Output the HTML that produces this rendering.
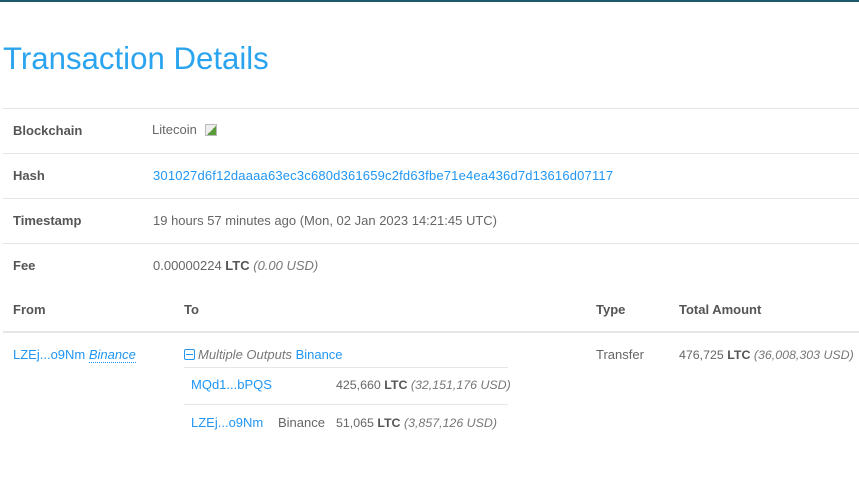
<!DOCTYPE html>
<html><head><style>
body{margin:0;width:859px;height:485px;background:#fff;font-family:"Liberation Sans",sans-serif;font-size:13px;color:#666;position:relative;overflow:hidden}
.a{position:absolute;white-space:nowrap}
.top{position:absolute;left:0;top:0;width:859px;height:2px;background:#1f5868}
.h{position:absolute;left:3px;height:1px;background:#e6e6e6;width:856px}
.lbl{font-weight:bold;color:#555}
.blue{color:#2196f3}
.s{font-size:12.4px}
b{color:#555}
i{color:#777}
</style></head><body>
<div class="top"></div>
<div class="a" style="left:3px;top:41px;font-size:31.2px;color:#2ba4f0">Transaction Details</div>
<div class="h" style="top:108px"></div>
<div class="a lbl" style="left:13px;top:123px">Blockchain</div>
<div class="a" style="left:152px;top:122px">Litecoin</div>
<div class="a" style="left:205px;top:124px;width:12px;height:12px;border:1px solid #bbb;box-sizing:border-box;background:linear-gradient(135deg,#eee 55%,#5a9c3a 55%)"></div>
<div class="h" style="top:153px"></div>
<div class="a lbl" style="left:13px;top:168px">Hash</div>
<div class="a blue" style="left:153px;top:168px;letter-spacing:0.18px">301027d6f12daaaa63ec3c680d361659c2fd63fbe71e4ea436d7d13616d07117</div>
<div class="h" style="top:198px"></div>
<div class="a lbl" style="left:13px;top:213px">Timestamp</div>
<div class="a" style="left:153px;top:213px">19 hours 57 minutes ago (Mon, 02 Jan 2023 14:21:45 UTC)</div>
<div class="h" style="top:243px"></div>
<div class="a lbl" style="left:13px;top:258px">Fee</div>
<div class="a" style="left:153px;top:258px">0.00000224 <b>LTC</b> <i>(0.00 USD)</i></div>
<div class="a lbl" style="left:13px;top:302px">From</div>
<div class="a lbl" style="left:184px;top:302px">To</div>
<div class="a lbl" style="left:596px;top:302px">Type</div>
<div class="a lbl" style="left:679px;top:302px">Total Amount</div>
<div class="h" style="top:331px;height:2px"></div>
<div class="a blue" style="left:13px;top:347px">LZEj...o9Nm <i style="color:#2196f3;border-bottom:1px dotted #2196f3">Binance</i></div>
<div class="a" style="left:184px;top:349px;width:9px;height:9px;border:1px solid #2196f3;border-radius:2px"></div>
<div class="a" style="left:186px;top:354px;width:7px;height:1px;background:#2196f3"></div>
<div class="a" style="left:198px;top:347px"><i>Multiple Outputs</i> <span class="blue">Binance</span></div>
<div class="a" style="left:184px;top:367px;width:324px;height:1px;background:#e6e6e6"></div>
<div class="a blue" style="left:191px;top:377px">MQd1...bPQS</div>
<div class="a s" style="left:336px;top:378px">425,660 <b>LTC</b> <i>(32,151,176 USD)</i></div>
<div class="a" style="left:184px;top:404px;width:324px;height:1px;background:#e6e6e6"></div>
<div class="a blue" style="left:191px;top:415px">LZEj...o9Nm</div>
<div class="a" style="left:278px;top:415px">Binance</div>
<div class="a s" style="left:336px;top:416px">51,065 <b>LTC</b> <i>(3,857,126 USD)</i></div>
<div class="a" style="left:596px;top:347px">Transfer</div>
<div class="a s" style="left:679px;top:348px">476,725 <b>LTC</b> <i>(36,008,303 USD)</i></div>
</body></html>
